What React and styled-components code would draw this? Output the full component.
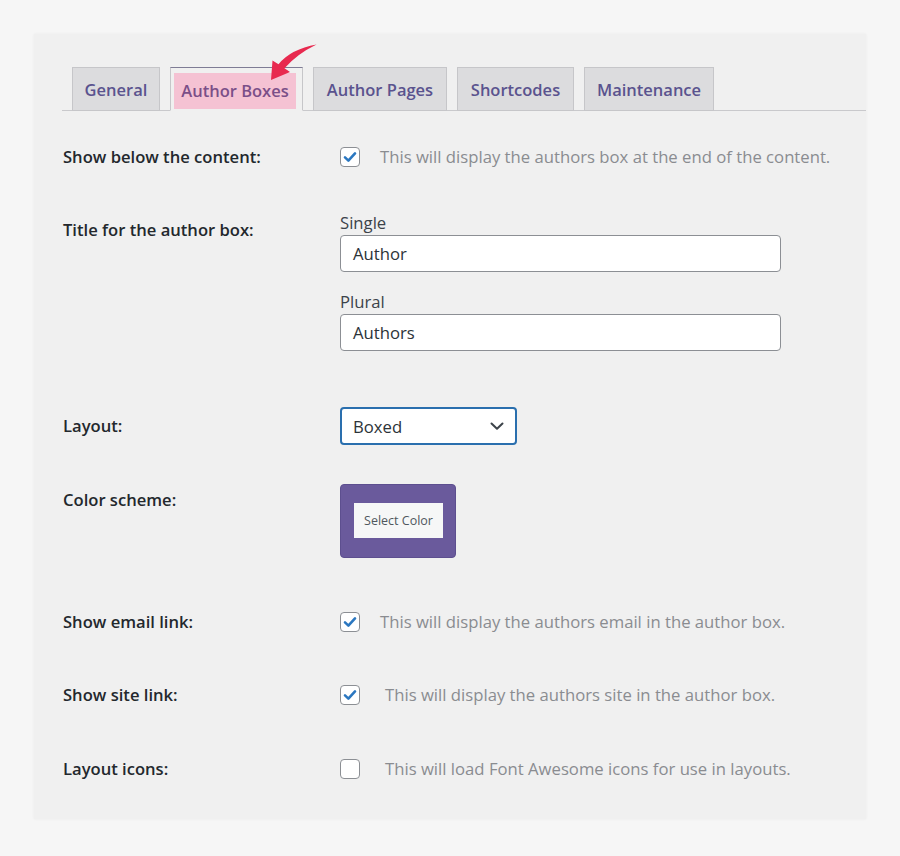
import React from "react";
import styled, { createGlobalStyle } from "styled-components";

const Global = createGlobalStyle`
  html, body { margin: 0; padding: 0; background: #f6f6f6; }
  body { font-family: "Open Sans", "Noto Sans", "Liberation Sans", sans-serif; }
  * { box-sizing: border-box; }
`;

const Page = styled.div`
  padding: 34px 34px 36px 34px;
`;

const Panel = styled.div`
  position: relative;
  width: 832px;
  background: #f0f0f0;
  box-shadow: 0 0 3px rgba(0, 0, 0, 0.05);
  padding-bottom: 38px;
`;

const Nav = styled.div`
  display: flex;
  align-items: flex-end;
  gap: 10px;
  margin-left: 28px;
  padding: 32px 0 0 10px;
  border-bottom: 1px solid #c9c9cc;
  height: 77px;
`;

const Tab = styled.div`
  display: flex;
  align-items: center;
  justify-content: center;
  width: ${(p) => p.$w}px;
  height: 44px;
  margin-bottom: -1px;
  background: ${(p) => (p.$active ? "#f0f0f0" : "#dcdcde")};
  border: 1px solid #c6c6c9;
  border-top-color: ${(p) => (p.$active ? "#7f7c95" : "#c6c6c9")};
  border-bottom-color: ${(p) => (p.$active ? "#f0f0f0" : "#c6c6c9")};
  font-size: 16.5px;
  font-weight: 600;
  color: #5a538e;
  padding: ${(p) => (p.$active ? "5px 6px 1px 3px" : "0")};
`;

const Highlight = styled.span`
  display: flex;
  align-items: center;
  justify-content: center;
  width: 100%;
  height: 100%;
  padding-bottom: 2px;
  background: #f5c2d3;
  color: #7b4f88;
`;

const Form = styled.div`
  padding-left: 29px;
`;

const Row = styled.div`
  display: grid;
  grid-template-columns: 277px 1fr;
  align-items: ${(p) => (p.$center ? "center" : "start")};
  margin-top: ${(p) => p.$mt}px;
`;

const Label = styled.div`
  font-size: 16.6px;
  font-weight: 600;
  line-height: 24px;
  color: #23282d;
  padding-top: ${(p) => p.$pt || 0}px;
`;

const Field = styled.div`
  display: flex;
  flex-direction: column;
`;

const CheckLine = styled.div`
  display: flex;
  align-items: center;
  height: 24px;
`;

const Box = styled.span`
  width: 20px;
  height: 20px;
  flex: none;
  border: 1px solid #8c8f94;
  border-radius: 4px;
  background: #fff;
  display: flex;
  align-items: center;
  justify-content: center;
  margin-right: ${(p) => p.$gap}px;
`;

const Desc = styled.span`
  font-size: 16.7px;
  color: #8a8c90;
  line-height: 24px;
  white-space: nowrap;
`;

const SubLabel = styled.div`
  font-size: 16.7px;
  line-height: 24px;
  color: #3c434a;
  margin-top: ${(p) => p.$mt || 0}px;
`;

const TextInput = styled.div`
  width: 441px;
  height: 37px;
  border: 1px solid #8c8f94;
  border-radius: 4px;
  background: #fff;
  display: flex;
  align-items: center;
  padding-left: 12px;
  font-size: 16.7px;
  color: #2c3338;
`;

const Select = styled.div`
  width: 177px;
  height: 38px;
  border: 2px solid #2a6fae;
  border-radius: 4px;
  background: #fff;
  display: flex;
  align-items: center;
  justify-content: space-between;
  padding: 0 10px 0 11px;
  font-size: 16.7px;
  color: #2c3338;
`;

const Swatch = styled.div`
  width: 116px;
  height: 74px;
  border-radius: 4px;
  background: #6a5a9c;
  border: 1px solid #5d4f8f;
  padding: 18px 0 0 13px;
`;

const ColorButton = styled.div`
  width: 89px;
  height: 35px;
  background: #f6f7f7;
  display: flex;
  align-items: center;
  justify-content: center;
  font-size: 12.5px;
  color: #50575e;
`;

const ArrowSvg = styled.svg`
  position: absolute;
  left: 0;
  top: 0;
  pointer-events: none;
`;

const Check = ({ checked, gap = 20, children }) => (
  <CheckLine>
    <Box $gap={gap}>
      {checked && (
        <svg width="16" height="16" viewBox="0 0 16 16">
          <path d="M3 8.4 L6.4 11.6 L13 4.4" fill="none" stroke="#2b77c0" strokeWidth="2.6" strokeLinecap="round" strokeLinejoin="round" />
        </svg>
      )}
    </Box>
    <Desc>{children}</Desc>
  </CheckLine>
);

const tabs = [
  { name: "General", w: 88 },
  { name: "Author Boxes", w: 133, active: true },
  { name: "Author Pages", w: 134 },
  { name: "Shortcodes", w: 117 },
  { name: "Maintenance", w: 130 },
];

export default function App() {
  return (
    <>
      <Global />
      <Page>
        <Panel>
          <Nav>
            {tabs.map((t) => (
              <Tab key={t.name} $w={t.w} $active={t.active}>
                {t.active ? <Highlight>{t.name}</Highlight> : t.name}
              </Tab>
            ))}
          </Nav>
          <Form>
            <Row $mt={34} $center>
              <Label>Show below the content:</Label>
              <Check checked>This will display the authors box at the end of the content.</Check>
            </Row>
            <Row $mt={42}>
              <Label $pt={7}>Title for the author box:</Label>
              <Field>
                <SubLabel>Single</SubLabel>
                <TextInput>Author</TextInput>
                <SubLabel $mt={18}>Plural</SubLabel>
                <TextInput>Authors</TextInput>
              </Field>
            </Row>
            <Row $mt={56} $center>
              <Label>Layout:</Label>
              <Field>
                <Select>
                  Boxed
                  <svg width="16" height="16" viewBox="0 0 16 16">
                    <path d="M2.5 5.5 L8 10.8 L13.5 5.5" fill="none" stroke="#3c434a" strokeWidth="2" strokeLinecap="round" strokeLinejoin="round" />
                  </svg>
                </Select>
              </Field>
            </Row>
            <Row $mt={39}>
              <Label $pt={4}>Color scheme:</Label>
              <Field>
                <Swatch>
                  <ColorButton>Select Color</ColorButton>
                </Swatch>
              </Field>
            </Row>
            <Row $mt={52} $center>
              <Label>Show email link:</Label>
              <Check checked>This will display the authors email in the author box.</Check>
            </Row>
            <Row $mt={49} $center>
              <Label>Show site link:</Label>
              <Check checked gap={25}>This will display the authors site in the author box.</Check>
            </Row>
            <Row $mt={50} $center>
              <Label>Layout icons:</Label>
              <Check gap={25}>This will load Font Awesome icons for use in layouts.</Check>
            </Row>
          </Form>
          <ArrowSvg width="832" height="120" viewBox="34 34 832 120">
            <path
              d="M271 80 L272.5 60.5 L278.5 64.2 Q291 49 316.5 44.5 Q297 54 284.5 68.2 L290 72 Z"
              fill="#e8294f"
            />
          </ArrowSvg>
        </Panel>
      </Page>
    </>
  );
}
